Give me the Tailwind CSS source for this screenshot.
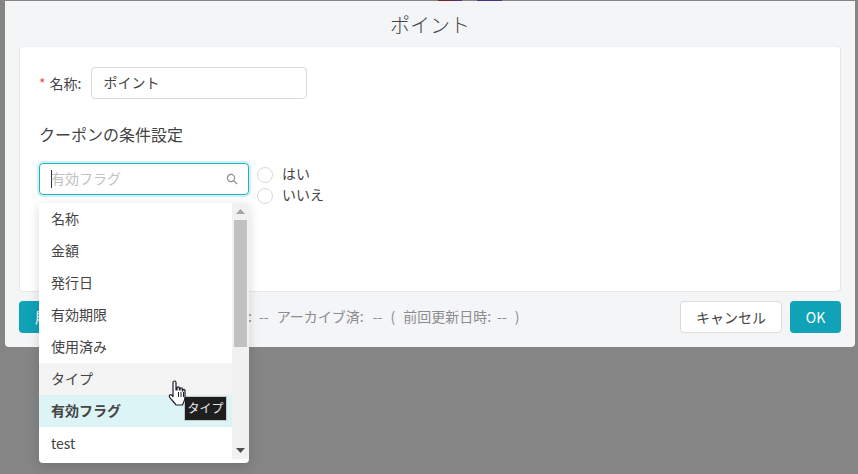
<!DOCTYPE html>
<html lang="ja">
<head>
  <meta charset="UTF-8" />
  <title>ポイント</title>
  <script src="https://cdn.jsdelivr.net/npm/@tailwindcss/browser@4"></script>
</head>
<body class="bg-[#858585] h-[474px] w-[858px] overflow-hidden relative font-['Noto_Sans_CJK_JP',sans-serif] text-[#333]">

  <!-- page behind the overlay, only its top edge shows -->
  <div class="absolute left-[438px] top-0 w-[14px] h-px bg-[#7a1f2c]"></div>
  <div class="absolute left-[452px] top-0 w-[10px] h-px bg-[#4a2f80]"></div>
  <div class="absolute left-[477px] top-0 w-[25px] h-px bg-[#4a2f80]"></div>

  <!-- Dialog -->
  <div class="ml-[5px] mt-px w-[850px] h-[346px] bg-[#f4f5f7] rounded-b-[4px] flex flex-col px-[14px]">
    <div class="h-[45px] flex items-center justify-center text-[20px] text-[#444] font-light pt-[2px]">ポイント</div>

    <div class="h-[246px] bg-white rounded-[4px] border border-[#e6e6e6] border-t-[#eeeeee] pl-[19px] pt-[20px] shrink-0">
      <div class="flex items-center h-[32px] text-[14px]">
        <span class="text-[#f5503c] mr-[4px]">*</span>
        <span class="text-[#444]">名称:</span>
        <div class="ml-[10px] w-[216px] h-[32px] border border-[#d9d9d9] rounded-[4px] flex items-center pl-[11px] pb-[2px] text-[14px] text-[#444]">ポイント</div>
      </div>
      <div class="mt-[24px] text-[16px] text-[#444] leading-[22px]">クーポンの条件設定</div>
      <div class="mt-[18px] flex">
        <div class="w-[210px] h-[32px] border border-[#1fb0c2] rounded-[4px] shadow-[0_0_0_2px_rgba(31,176,194,0.2)] flex items-center pl-[11px] pr-[10px]">
          <span class="w-px h-[18px] bg-[#333]"></span>
          <span class="text-[14px] text-[#bfbfbf] flex-1 -ml-px pb-[2px]">有効フラグ</span>
          <svg width="12" height="12" viewBox="0 0 12 12" fill="none" stroke="#8c8c8c" stroke-width="1.2"><circle cx="5" cy="5" r="3.6"/><path d="M7.7 7.7 11 11"/></svg>
        </div>
        <div class="ml-[8px] mt-px flex flex-col text-[14px] text-[#444]">
          <div class="flex items-center h-[21px]"><span class="w-[16px] h-[16px] rounded-full border border-[#d9d9d9] bg-white mr-[9px]"></span><span class="pb-[3px]">はい</span></div>
          <div class="flex items-center h-[21px]"><span class="w-[16px] h-[16px] rounded-full border border-[#d9d9d9] bg-white mr-[9px]"></span><span class="pb-[3px]">いいえ</span></div>
        </div>
      </div>
    </div>

    <div class="mt-[9px] flex items-center h-[32px]">
      <button class="w-[60px] h-[32px] bg-[#10a2b6] rounded-[4px] text-white text-[14px] shrink-0">履歴</button>
      <div class="ml-[169px] flex-1 flex items-center text-[14px] text-[#8c8c8c] whitespace-pre pb-[2px]">
        <span>:</span><span class="ml-[7px]">--</span><span class="ml-[8px]">アーカイブ済:</span><span class="ml-[9px]">--</span><span class="ml-[8px]">(</span><span class="ml-[8px]">前回更新日時:</span><span class="ml-[6px]">--</span><span class="ml-[8px]">)</span>
      </div>
      <button class="w-[102px] h-[32px] bg-white border border-[#dcdcdc] rounded-[4px] text-[14px] text-[#444]">キャンセル</button>
      <button class="ml-[8px] w-[51px] h-[32px] bg-[#10a2b6] rounded-[4px] text-white text-[14px]">OK</button>
    </div>
  </div>

  <!-- Dropdown -->
  <div class="absolute left-[39px] top-[203px] w-[210px] h-[260px] bg-white rounded-[4px] shadow-[0_3px_12px_rgba(0,0,0,0.15)] flex overflow-hidden text-[14px] text-[#444]">
    <div class="w-[193px]">
      <div class="h-[32px] flex items-center pl-[12px] pb-[2px]">名称</div>
      <div class="h-[32px] flex items-center pl-[12px] pb-[1px]">金額</div>
      <div class="h-[32px] flex items-center pl-[12px] pb-[1px]">発行日</div>
      <div class="h-[32px] flex items-center pl-[12px] pb-[1px]">有効期限</div>
      <div class="h-[32px] flex items-center pl-[12px] pb-[1px]">使用済み</div>
      <div class="h-[32px] flex items-center pl-[12px] pb-[1px] bg-[#f4f4f4]">タイプ</div>
      <div class="h-[32px] flex items-center pl-[12px] pb-[1px] bg-[#dcf4f5] font-bold">有効フラグ</div>
      <div class="h-[32px] flex items-center pl-[12px]">test</div>
    </div>
    <div class="w-[17px] h-[256px] bg-[#f1f1f1] flex flex-col items-center">
      <svg class="mt-[6px]" width="9" height="5" viewBox="0 0 9 5"><path d="M4.500 0 9 5H0z" fill="#a3a3a3"/></svg>
      <div class="mt-[6px] w-[13px] h-[127px] bg-[#c1c1c1]"></div>
      <svg class="mt-auto mb-[6px]" width="9" height="5" viewBox="0 0 9 5"><path d="M0 0h9L4.500 5z" fill="#505050"/></svg>
    </div>
  </div>

  <!-- Tooltip -->
  <div class="absolute left-[184px] top-[396px] w-[43px] h-[25px] bg-[#1e1e1e] border border-[#c8c8c8] text-[#e8e8e8] text-[12px] flex items-center justify-center pb-px">タイプ</div>

  <!-- Hand cursor -->
  <svg class="absolute left-[168px] top-[380px]" width="20" height="26" viewBox="0 0 20 26">
    <path d="M5 2.500c0-2 3-2 3 0V10l1 0V8c0-1.600 2.400-1.600 2.400 0v2h.6V9c0-1.500 2.300-1.500 2.300 0v2h.5v-.6c0-1.500 2.200-1.500 2.200 0V17c0 3.500-2 6.500-2.500 8H8c-1-2-5.500-6-6.500-8-.8-1.600 1-3 2.300-1.800L5 16.500z" fill="#fff" stroke="#1c1c2c" stroke-width="1.200" stroke-linejoin="round"/>
    <path d="M10.500 12v5M13 12v5M15.500 12v5" stroke="#1c1c2c" stroke-width="1"/>
  </svg>
</body>
</html>
